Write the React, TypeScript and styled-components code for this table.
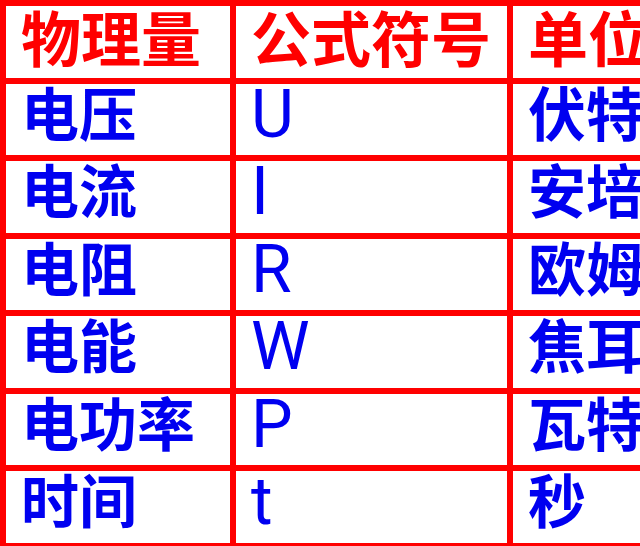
import React from "react";
import styled, { createGlobalStyle } from "styled-components";

const Global = createGlobalStyle`
  html, body {
    margin: 0;
    padding: 0;
    width: 640px;
    height: 546px;
    overflow: hidden;
    background: #ffffff;
  }
`;

const Table = styled.div`
  display: grid;
  grid-template-columns: 224px 271px 220px;
  grid-template-rows: 72px 71px 72px 71px 72px 71px 72px 71px;
  gap: 6px;
  padding: 6px 0 0 6px;
  background: #ff0000;
  width: max-content;
`;

const Cell = styled.div<{ $head?: boolean; $latin?: boolean }>`
  background: #ffffff;
  display: flex;
  align-items: flex-start;
  padding-left: 15px;
  overflow: hidden;
  white-space: nowrap;
  line-height: 1;
  color: ${(p) => (p.$head ? "#ff0000" : "#0000f0")};
  font-family: ${(p) =>
    p.$latin
      ? 'Roboto, "Liberation Sans", Arial, sans-serif'
      : '"Noto Sans CJK SC", "Noto Sans", sans-serif'};
  font-size: ${(p) => (p.$head ? "60px" : p.$latin ? "66px" : "58px")};
  font-weight: ${(p) => (p.$latin ? 400 : 700)};
`;

const Text = styled.span<{ $head?: boolean }>`
  display: block;
  margin-top: ${(p) => (p.$head ? "0px" : "-2px")};
`;

const rows: [string, string, string][] = [
  ["电压", "U", "伏特"],
  ["电流", "I", "安培"],
  ["电阻", "R", "欧姆"],
  ["电能", "W", "焦耳"],
  ["电功率", "P", "瓦特"],
  ["时间", "t", "秒"],
];

export default function App() {
  return (
    <>
      <Global />
      <Table>
        <Cell $head>
          <Text $head>物理量</Text>
        </Cell>
        <Cell $head>
          <Text $head>公式符号</Text>
        </Cell>
        <Cell $head>
          <Text $head>单位</Text>
        </Cell>
        {rows.map(([q, s, u]) => (
          <React.Fragment key={q}>
            <Cell>
              <Text>{q}</Text>
            </Cell>
            <Cell $latin>
              <Text>{s}</Text>
            </Cell>
            <Cell>
              <Text>{u}</Text>
            </Cell>
          </React.Fragment>
        ))}
      </Table>
    </>
  );
}
